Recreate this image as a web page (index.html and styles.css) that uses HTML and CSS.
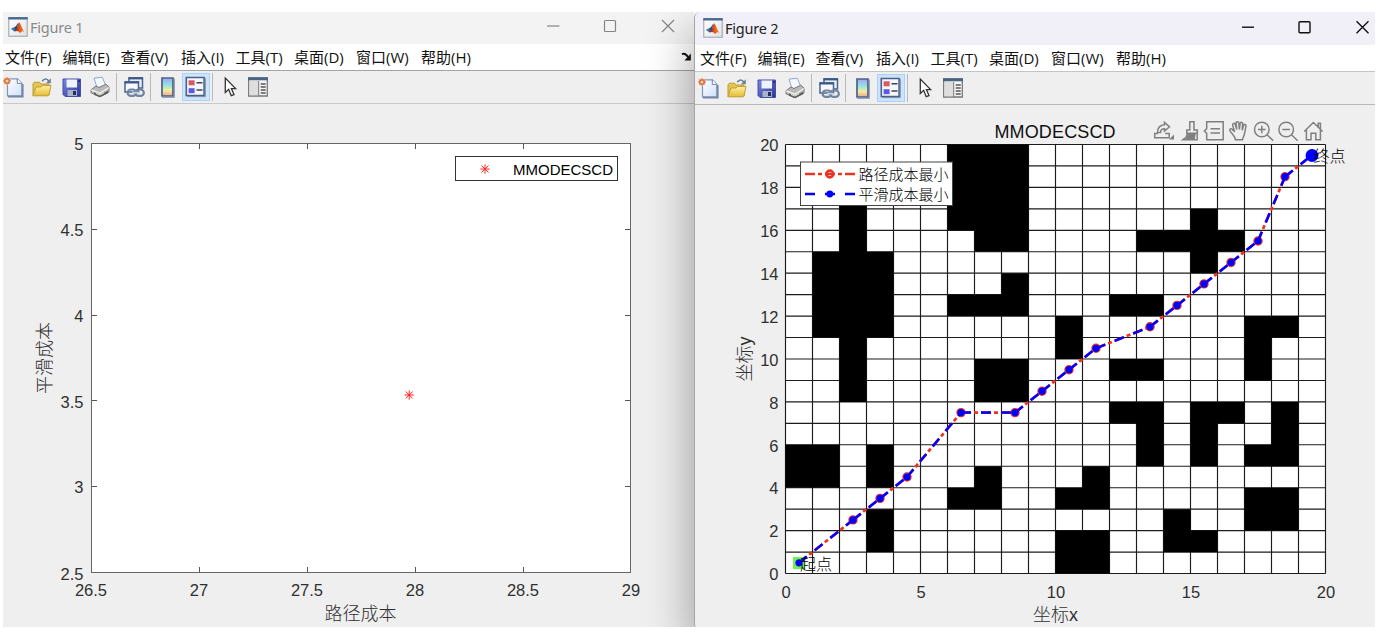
FILE: index.html
```html
<!DOCTYPE html>
<html lang="zh-CN">
<head>
<meta charset="utf-8">
<title>Figures</title>
<link rel="stylesheet" href="styles.css">
</head>
<body>
<svg class="defs" aria-hidden="true">
  <defs>
    <linearGradient id="g-page" x1="0" y1="0" x2="1" y2="1"><stop offset="0" stop-color="#fff"/><stop offset="1" stop-color="#cfe0f8"/></linearGradient>
    <linearGradient id="g-folder" x1="0" y1="0" x2="0" y2="1"><stop offset="0" stop-color="#fff0a0"/><stop offset="1" stop-color="#e3bc35"/></linearGradient>
    <linearGradient id="g-bar" x1="0" y1="0" x2="0" y2="1"><stop offset="0" stop-color="#a7a4e8"/><stop offset=".35" stop-color="#8fdde8"/><stop offset=".68" stop-color="#f0eea0"/><stop offset="1" stop-color="#efa88e"/></linearGradient>
    <linearGradient id="g-save" x1="0" y1="0" x2="1" y2="1"><stop offset="0" stop-color="#7b85e6"/><stop offset="1" stop-color="#2a3590"/></linearGradient>
    <linearGradient id="g-peak" x1="0" y1="0" x2="1" y2="0"><stop offset="0" stop-color="#6b1a10"/><stop offset=".45" stop-color="#e2571e"/><stop offset="1" stop-color="#f08a28"/></linearGradient>
    <linearGradient id="g-logo" x1="0" y1="0" x2="1" y2="1"><stop offset="0" stop-color="#fff"/><stop offset="1" stop-color="#dfe3e6"/></linearGradient>
    <symbol id="logo" viewBox="0 0 20 20">
      <rect x=".8" y=".8" width="18.4" height="18.4" fill="url(#g-logo)" stroke="#9a9fa5"/>
      <path d="M.3 1.3h19.4" stroke="#46698f" stroke-width="2.4"/>
      <path d="M2.8 11.8 7 9.8l2 1.2-2.6 3.6z" fill="#3d78b5"/>
      <path d="M7 9.8c1.4-.2 2-2.8 3.6-4.2L8.4 13l-2 1.6z" fill="#254a78"/>
      <path d="M6.6 14.5c2.4-1.6 3-7.4 4.7-9.2 1.4 1.2 3.2 8.1 5.7 10.2-2.2-2-3.4-1.8-4.9.8-.8-1.7-2.5-3.2-5.5-1.8z" fill="url(#g-peak)"/>
    </symbol>
    <symbol id="i-new" viewBox="0 0 22 22">
      <path d="M4.5 2.8h10l4.3 4.4v12.6H4.5z" fill="url(#g-page)" stroke="#7f96bb" stroke-width="1.2"/>
      <path d="M19.7 8v12.7H5" fill="none" stroke="#7385a8" stroke-width="1.8"/>
      <path d="M14.3 2.8v4.6h4.5" fill="#fff" stroke="#6d85ad"/>
      <path d="M4 1v8M0 5h8M1.2 2.2l5.6 5.6M6.8 2.2 1.2 7.8" stroke="#edaa84" stroke-width="1.8"/>
      <circle cx="4" cy="5" r="2.2" fill="#ffd6a0" stroke="#d2683c" stroke-width="1.3"/>
    </symbol>
    <symbol id="i-open" viewBox="0 0 22 22">
      <path d="M2 19V7.5l1.5-1.3h5L10 8h8v11z" fill="#e3c550" stroke="#bd9b38"/>
      <path d="M1.8 19.8 5 11h5l1.5-1.6H20l-2 9.6-1.4.8z" fill="url(#g-folder)" stroke="#c09e38"/>
      <path d="M11.2 5.2c2-3 4.8-3 6.8 0" fill="none" stroke="#6b7f9b" stroke-width="1.6"/><path d="M19.8 2.2v5h-5z" fill="#6b7f9b"/>
    </symbol>
    <symbol id="i-save" viewBox="0 0 22 22">
      <path d="M2 3h17.5v17.5H4L2 18.5z" fill="url(#g-save)" stroke="#4450a6"/>
      <path d="M5.5 3.5H16v8H5.5z" fill="#edf2ff"/><path d="M6.5 14H16v6H6.5z" fill="#a9b3c7"/><path d="M12 15h3v4h-3z" fill="#242c60"/><path d="M17 4h2v2h-2z" fill="#25307c"/>
    </symbol>
    <symbol id="i-print" viewBox="0 0 22 22">
      <path d="M5 2.2l8.2-1 3.6 8.3-8.5 3z" fill="#f5f9ff" stroke="#8fa8cc"/>
      <path d="M2 13.8 7 10l3 1.5 6.8-3.3L20 11v5l-9 4.8-9-4z" fill="#b9b9b9" stroke="#777"/>
      <path d="M2.3 14 11 17.2 20 11.5" fill="none" stroke="#eee" stroke-width="1.4"/>
      <path d="M5 16.3l6 2.8 8-4.3v2.5l-8 4-6-2.6z" fill="#5f5f5c"/><path d="M7 17.5l4 1.5 4-2.2" fill="none" stroke="#e8e4c4"/>
    </symbol>
    <symbol id="i-link" viewBox="0 0 22 22">
      <path d="M6 2h13.5v10H6z" fill="#e9eff9" stroke="#49658e" stroke-width="1.5"/><path d="M5.5 2.3H20" stroke="#3c588a" stroke-width="2.2"/>
      <path d="M2 6h13.5v10H2z" fill="#f7f9fd" stroke="#49658e" stroke-width="1.5"/><path d="M1.5 6.4H16" stroke="#3c588a" stroke-width="2.2"/>
      <rect x="4.6" y="13.5" width="8.6" height="6.4" rx="3.2" fill="none" stroke="#71849f" stroke-width="2.2"/><rect x="12.2" y="13.5" width="8.6" height="6.4" rx="3.2" fill="none" stroke="#71849f" stroke-width="2.2"/><path d="M9 16.7h7.4" stroke="#c2cedd" stroke-width="1.8"/>
    </symbol>
    <symbol id="i-bar" viewBox="0 0 22 22">
      <path d="M5 2h11v18H5z" fill="url(#g-bar)" stroke="#4c6087" stroke-width="1.7"/><path d="M17.2 2.6v18.5H5" fill="none" stroke="#7c8ba5" stroke-width="1.1"/>
    </symbol>
    <symbol id="i-legend" viewBox="0 0 22 22">
      <path d="M1.3 1.5h17.8v18H1.3z" fill="#f4f7fd" stroke="#4c6087" stroke-width="1.6"/><path d="M20.3 2v18.6H2" fill="none" stroke="#7c8ba5"/>
      <path d="M3.6 4.3h6v5h-6z" fill="#d75a5c"/><path d="M3.6 12.2h6v5h-6z" fill="#5b5be0"/><path d="M11.5 6.8h6M11.5 14h6" stroke="#444" stroke-width="1.4"/>
    </symbol>
    <symbol id="i-arrow" viewBox="0 0 22 22">
      <path d="M6.3 2v14.5l3.4-3.2 2.5 6.4 2.8-1.1-2.6-6h4.2z" fill="#fff" stroke="#333" stroke-width="1.3"/>
    </symbol>
    <symbol id="i-inspect" viewBox="0 0 22 22">
      <path d="M1.7 2h18.6v18H1.7z" fill="#f5f5f5" stroke="#777" stroke-width="1.3"/><path d="M1 2.8h20" stroke="#4a6584" stroke-width="3"/>
      <path d="M2.4 5h9v14.3h-9z" fill="#dedede"/><path d="M11.7 5v15" stroke="#777"/><path d="M13.7 8h5M13.7 11h5M13.7 14h5M13.7 17h5" stroke="#555" stroke-width="1.4"/>
    </symbol>
  </defs>
</svg>

<main class="desktop">
  <section class="window window-back">
    <header class="titlebar">
      <svg class="logo"><use href="#logo"/></svg><span class="title">Figure 1</span>
      <svg class="controls" width="130" height="20" viewBox="0 0 130 20"><path d="M0 9h12.5"/><rect x="57.5" y="3.5" width="11" height="11" rx="1"/><path d="m115 3 12 12m0-12-12 12"/></svg>
    </header>
    <nav class="menubar">
      <span>文件(F)</span><span>编辑(E)</span><span>查看(V)</span><span>插入(I)</span><span>工具(T)</span><span>桌面(D)</span><span>窗口(W)</span><span>帮助(H)</span>
      <svg class="dock" width="12" height="10" viewBox="0 0 12 10"><path d="M1 2.2c2.5-1.3 4.5.3 6 2.8" fill="none" stroke="#111" stroke-width="2"/><path d="M9.8 1.5v7H3.5z" fill="#111"/></svg>
    </nav>
    <div class="toolbar">
      <svg class="tool"><use href="#i-new"/></svg><svg class="tool"><use href="#i-open"/></svg><svg class="tool tool-save"><use href="#i-save"/></svg><svg class="tool"><use href="#i-print"/></svg>
      <i class="sep"></i><svg class="tool"><use href="#i-link"/></svg><i class="sep"></i><svg class="tool tool-bar"><use href="#i-bar"/></svg>
      <span class="pressed"><svg class="tool"><use href="#i-legend"/></svg></span><i class="sep"></i><svg class="tool tool-arrow"><use href="#i-arrow"/></svg><svg class="tool"><use href="#i-inspect"/></svg>
    </div>
    <svg class="chart" width="691" height="523" viewBox="3 104 691 523">
      <rect x="91.5" y="143.5" width="539" height="429" fill="#fff" stroke="#666"/>
      <path class="tick" d="M199.5 572v-5M307.5 572v-5M415.5 572v-5M523.5 572v-5M199.5 144v5M307.5 144v5M415.5 144v5M523.5 144v5M92 486.5h5M92 400.5h5M92 315.5h5M92 229.5h5M630 486.5h-5M630 400.5h-5M630 315.5h-5M630 229.5h-5"/>
      <g class="num" text-anchor="middle"><text x="91" y="596">26.5</text><text x="199" y="596">27</text><text x="307" y="596">27.5</text><text x="415" y="596">28</text><text x="523" y="596">28.5</text><text x="631" y="596">29</text></g>
      <g class="num" text-anchor="end"><text x="83.5" y="579.5">2.5</text><text x="83.5" y="493">3</text><text x="83.5" y="407.5">3.5</text><text x="83.5" y="322">4</text><text x="83.5" y="236">4.5</text><text x="83.5" y="150">5</text></g>
      <text class="label" x="360.5" y="620" text-anchor="middle">路径成本</text>
      <text class="label" transform="translate(51 358) rotate(-90)" text-anchor="middle">平滑成本</text>
      <path class="star" d="M404.5 395h9.4M409.2 390.3v9.4M405.7 391.5l7 7M412.7 391.5l-7 7"/>
      <rect x="455.5" y="156.5" width="162" height="24" fill="#fff" stroke="#333"/>
      <path class="star" d="M480.3 169h9.4M485 164.3v9.4M481.5 165.5l7 7M488.5 165.5l-7 7"/>
      <text class="legend-latin" x="513" y="175" textLength="100">MMODECSCD</text>
    </svg>
  </section>

  <section class="window window-front">
    <header class="titlebar">
      <svg class="logo"><use href="#logo"/></svg><span class="title">Figure 2</span>
      <svg class="controls" width="130" height="20" viewBox="0 0 130 20"><path d="M1 9.2h12"/><rect x="58" y="3.7" width="11" height="11" rx="1"/><path d="m115.5 3.2 12 12m0-12-12 12"/></svg>
    </header>
    <nav class="menubar">
      <span>文件(F)</span><span>编辑(E)</span><span>查看(V)</span><span>插入(I)</span><span>工具(T)</span><span>桌面(D)</span><span>窗口(W)</span><span>帮助(H)</span>
    </nav>
    <div class="toolbar">
      <svg class="tool"><use href="#i-new"/></svg><svg class="tool"><use href="#i-open"/></svg><svg class="tool tool-save"><use href="#i-save"/></svg><svg class="tool"><use href="#i-print"/></svg>
      <i class="sep"></i><svg class="tool"><use href="#i-link"/></svg><i class="sep"></i><svg class="tool tool-bar"><use href="#i-bar"/></svg>
      <span class="pressed"><svg class="tool"><use href="#i-legend"/></svg></span><i class="sep"></i><svg class="tool tool-arrow"><use href="#i-arrow"/></svg><svg class="tool"><use href="#i-inspect"/></svg>
    </div>
    <svg class="chart" width="680" height="522" viewBox="695 105 680 522">
      <rect x="785.5" y="144.5" width="540" height="429" fill="#fff"/>
      <!-- grid and obstacles are in cell units, origin at the lower left -->
      <g transform="translate(785.5 573.5) scale(27 -21.45)">
        <path class="grid" d="M0 0v20M1 0v20M2 0v20M3 0v20M4 0v20M5 0v20M6 0v20M7 0v20M8 0v20M9 0v20M10 0v20M11 0v20M12 0v20M13 0v20M14 0v20M15 0v20M16 0v20M17 0v20M18 0v20M19 0v20M20 0v20M0 0h20M0 1h20M0 2h20M0 3h20M0 4h20M0 5h20M0 6h20M0 7h20M0 8h20M0 9h20M0 10h20M0 11h20M0 12h20M0 13h20M0 14h20M0 15h20M0 16h20M0 17h20M0 18h20M0 19h20M0 20h20"/>
        <path d="M6 16h1v-1h2v5H6zM2 15h1v3H2zM1 11h3v4H1zM2 8h1v3H2zM6 12h3v2H8v-1H6zM7 8h2v2H7zM0 4h2v2H0zM3 4h1v2H3zM3 1h1v2H3zM6 3h2v2H7V4H6zM10 3h2v2h-1V4h-1zM10 0h2v2h-2zM10 10h1v2h-1zM12 12h2v1h-2zM12 9h2v1h-2zM12 7h1V5h1v3h-2zM15 5h1v2h1v1h-2zM17 5h2v3h-1V6h-1zM17 9h1v2h1v1h-2zM17 2h2v2h-2zM14 1h2v1h-1v1h-1zM13 15h2v-1h1v1h1v1h-1v1h-1v-1h-2z"/>
      </g>
      <g class="num" text-anchor="middle"><text x="786" y="597.5">0</text><text x="921" y="597.5">5</text><text x="1056" y="597.5">10</text><text x="1191" y="597.5">15</text><text x="1326" y="597.5">20</text></g>
      <g class="num" text-anchor="end"><text x="778.5" y="580">0</text><text x="778.5" y="537">2</text><text x="778.5" y="494">4</text><text x="778.5" y="451.5">6</text><text x="778.5" y="408.5">8</text><text x="778.5" y="366">10</text><text x="778.5" y="323">12</text><text x="778.5" y="280">14</text><text x="778.5" y="237">16</text><text x="778.5" y="194">18</text><text x="778.5" y="151">20</text></g>
      <text class="chart-title" x="994.5" y="138" textLength="121">MMODECSCD</text>
      <text class="label" x="1055.5" y="621" text-anchor="middle">坐标x</text>
      <text class="label" transform="translate(751 359) rotate(-90)" text-anchor="middle">坐标y</text>

      <rect x="793" y="557" width="12" height="12" fill="#6cf24c"/>
      <g class="route">
        <path class="red" d="M799 562.8 853 519.9M853 519.9 880 498.4M880 498.4 907 477M907 477 961 412.6M961 412.6h54M1015 412.6l27-21.4M1042 391.2l27-21.5M1069 369.7l27-21.4M1096 348.3l54-21.5M1150 326.8l27-21.4M1177 305.4l27-21.5M1204 283.9l27-21.4M1231 262.5l27-21.5M1258 241l27-64.3M1285 176.7l27-21.5"/>
        <g class="red-dots"><circle cx="853" cy="519.9" r="4"/><circle cx="880" cy="498.4" r="4"/><circle cx="907" cy="477" r="4"/><circle cx="961" cy="412.6" r="4"/><circle cx="1015" cy="412.6" r="4"/><circle cx="1042" cy="391.2" r="4"/><circle cx="1069" cy="369.7" r="4"/><circle cx="1096" cy="348.3" r="4"/><circle cx="1150" cy="326.8" r="4"/><circle cx="1177" cy="305.4" r="4"/><circle cx="1204" cy="283.9" r="4"/><circle cx="1231" cy="262.5" r="4"/><circle cx="1258" cy="241" r="4"/><circle cx="1285" cy="176.7" r="4"/></g>
        <path class="blue" d="M799 562.8 853 519.9M853 519.9 880 498.4M880 498.4 907 477M907 477 961 412.6M961 412.6h54M1015 412.6l27-21.4M1042 391.2l27-21.5M1069 369.7l27-21.4M1096 348.3l54-21.5M1150 326.8l27-21.4M1177 305.4l27-21.5M1204 283.9l27-21.4M1231 262.5l27-21.5M1258 241l27-64.3M1285 176.7l27-21.5"/>
        <g fill="#00f"><circle cx="799" cy="562.8" r="3.6"/><circle cx="853" cy="519.9" r="3.6"/><circle cx="880" cy="498.4" r="3.6"/><circle cx="907" cy="477" r="3.6"/><circle cx="961" cy="412.6" r="3.6"/><circle cx="1015" cy="412.6" r="3.6"/><circle cx="1042" cy="391.2" r="3.6"/><circle cx="1069" cy="369.7" r="3.6"/><circle cx="1096" cy="348.3" r="3.6"/><circle cx="1150" cy="326.8" r="3.6"/><circle cx="1177" cy="305.4" r="3.6"/><circle cx="1204" cy="283.9" r="3.6"/><circle cx="1231" cy="262.5" r="3.6"/><circle cx="1258" cy="241" r="3.6"/><circle cx="1285" cy="176.7" r="3.6"/><circle cx="1312" cy="155.5" r="6.4"/></g>
      </g>
      <text class="point" x="800" y="569.5">起点</text>
      <text class="point" x="1313.5" y="162">终点</text>

      <rect x="800.5" y="162" width="152" height="43.5" fill="#fff" stroke="#444"/>
      <path class="red" d="M805 174h50"/><circle cx="829.8" cy="174" r="3.4" fill="none" stroke="#ea3323" stroke-width="2.6"/>
      <path class="blue" d="M805 194h50"/><circle cx="829.8" cy="194" r="3.4" fill="#00f"/>
      <text class="legend-cn" x="858.5" y="180">路径成本最小</text><text class="legend-cn" x="858.5" y="200">平滑成本最小</text>

      <g class="axes-tools">
        <path d="M1158 133.5h-3.3v4.3h14.5v-4.3h-4M1157.5 132.5c.2-5.3 3-7.5 7-7.7v-2.3l5 4.3-5 4.3v-2.4c-2.8 0-4 1.3-4 3.8z"/><path class="solid" d="M1174 134.5v5h-5z"/>
        <path d="M1189.8 121.8h4.2v8.2h3.3v3.3h-10.5V130h3zM1187.5 133.5c-.5 3-2 4.5-4.5 6.2h14.2v-6"/><path class="solid" d="M1187.7 134h8l-1 6h-11.3c2.5-1.2 4-3.2 4.3-6z"/>
        <path d="M1206.7 121.8h16.5v18h-16.5v-6.4l-2.3-2.4 2.3-2.4zM1210.5 128.8h9.5M1210.5 133h9.5"/>
        <path d="M1235.5 139.8c-.5-4.5-4.5-6.4-5.7-9.6-.2-1.6 1.7-2 2.6-.8l2.2 2.4-2-6.7c-.3-1.8 2-2.4 2.6-.8l1.6 5.2-.7-6.4c0-1.8 2.5-1.9 2.7-.2l.6 6.5.7-6c.3-1.7 2.6-1.4 2.5.3l-.4 6.5 1.4-4.9c.6-1.6 2.7-.9 2.4.8l-1.6 8c-.2 2-1.6 3-1.9 5.7z"/>
        <circle cx="1261.8" cy="129.5" r="7.3"/><path d="M1267 134.8l6.3 6M1258 129.5h7.6M1261.8 125.7v7.6"/>
        <circle cx="1286.2" cy="129.5" r="7.3"/><path d="M1291.4 134.8l6.3 6M1282.4 129.5h7.6"/>
        <path d="M1304.2 131.5l9.2-9 9.2 9M1306.4 130v9.8h4.6v-6.5h4.8v6.5h4.6V130M1318.2 126.5v-3.3h2.2v5.5"/>
      </g>
    </svg>
  </section>
</main>
</body>
</html>
```
FILE: styles.css
```css
body { margin: 0; background: #fff; }
.defs { position: absolute; width: 0; height: 0; }
.desktop { display: flex; width: 1372px; height: 615px; margin: 12px 0 0 3px; overflow: hidden; }
.window { display: flex; flex-direction: column; background: #efefef; }
.window-back { width: 691px; flex: none; }
.window-front {
  position: relative; width: 680px; flex: none; border-left: 1px solid #a5a5a5;
  border-radius: 6px 0 0 3px; box-shadow: 0 22px 48px rgba(0, 0, 0, .38);
}
.titlebar { display: flex; align-items: center; height: 32px; box-sizing: border-box; padding: 0 17px 3px 5px; background: #f3f3f3; }
.window-front .titlebar { height: 33px; padding: 0 4px 2px 8px; background: #f1f0f8; border-radius: 6px 0 0 0; }
.logo { width: 20px; height: 20px; margin-right: 2px; }
.title { font: 14.5px/20px "Noto Sans", sans-serif; letter-spacing: -.22px; color: #8a8a8a; }
.window-front .title { color: #222; }
.controls { margin-left: auto; fill: none; stroke: #858585; stroke-width: 1.2; }
.window-front .controls { stroke: #111; stroke-width: 1.4; }
.menubar {
  display: grid; grid-template-columns: 57.5px 58px 60.5px 54.5px 58.5px 62px 65px 60px 1fr;
  align-items: center; height: 27px; box-sizing: border-box; padding: 0 0 0 2px;
  background: #fff; border-bottom: 1px solid #a4a4a4; color: #111;
  font: 15px/26px "Open Sans", "Noto Sans CJK SC", sans-serif; white-space: nowrap;
}
.window-front .menubar { padding-left: 5px; border-color: #c4c4c4; }
.dock { justify-self: end; margin-right: 1px; }
.toolbar { display: flex; align-items: center; height: 33px; box-sizing: border-box; border-bottom: 1px solid #c8c8c8; }
.window-front .toolbar { padding-left: 3px; border-color: #b8b8b8; }
.tool { width: 22px; height: 22px; flex: none; margin-right: 6px; }
.tool-save { margin-left: 2px; }
.sep { width: 1px; height: 28px; margin: 0 6px 0 -1px; background: #b9b9b9; }
.tool-bar { margin-right: 3px; }
.pressed { box-sizing: border-box; width: 28px; height: 28px; padding: 2px; margin-right: 3px; border: 1px solid #a9d1fa; background: #cce4fd; }
.pressed .tool { margin: 0; display: block; }
.tool-arrow { margin-right: 6px; }
.chart { display: block; flex: none; overflow: visible; }
.num { font: 16.5px "Liberation Sans", sans-serif; fill: #303030; }
.label { font: 300 18px "Liberation Sans", "Noto Sans CJK SC", sans-serif; fill: #303030; }
.chart-title { font: 18px "Liberation Sans", sans-serif; fill: #111; }
.legend-latin { font: 15px "Liberation Sans", sans-serif; }
.legend-cn { font: 300 15px "Noto Sans CJK SC", sans-serif; }
.point { font: 300 16px "Noto Sans CJK SC", sans-serif; }
.tick { stroke: #555; fill: none; }
.star { stroke: #f22; stroke-width: 1; fill: none; }
.grid { stroke: #1c1c1c; stroke-width: 1.15px; vector-effect: non-scaling-stroke; fill: none; }
.red { stroke: #ea3323; stroke-width: 2.7; stroke-dasharray: 10 3 4 3; fill: none; }
.blue { stroke: #00f; stroke-width: 2.5; stroke-dasharray: 10 10; fill: none; }
.red-dots { fill: #ea3323; stroke: #ea3323; stroke-width: 1.4; }
.axes-tools { fill: none; stroke: #808080; stroke-width: 1.5; }
.axes-tools .solid { fill: #808080; stroke: none; }
```
